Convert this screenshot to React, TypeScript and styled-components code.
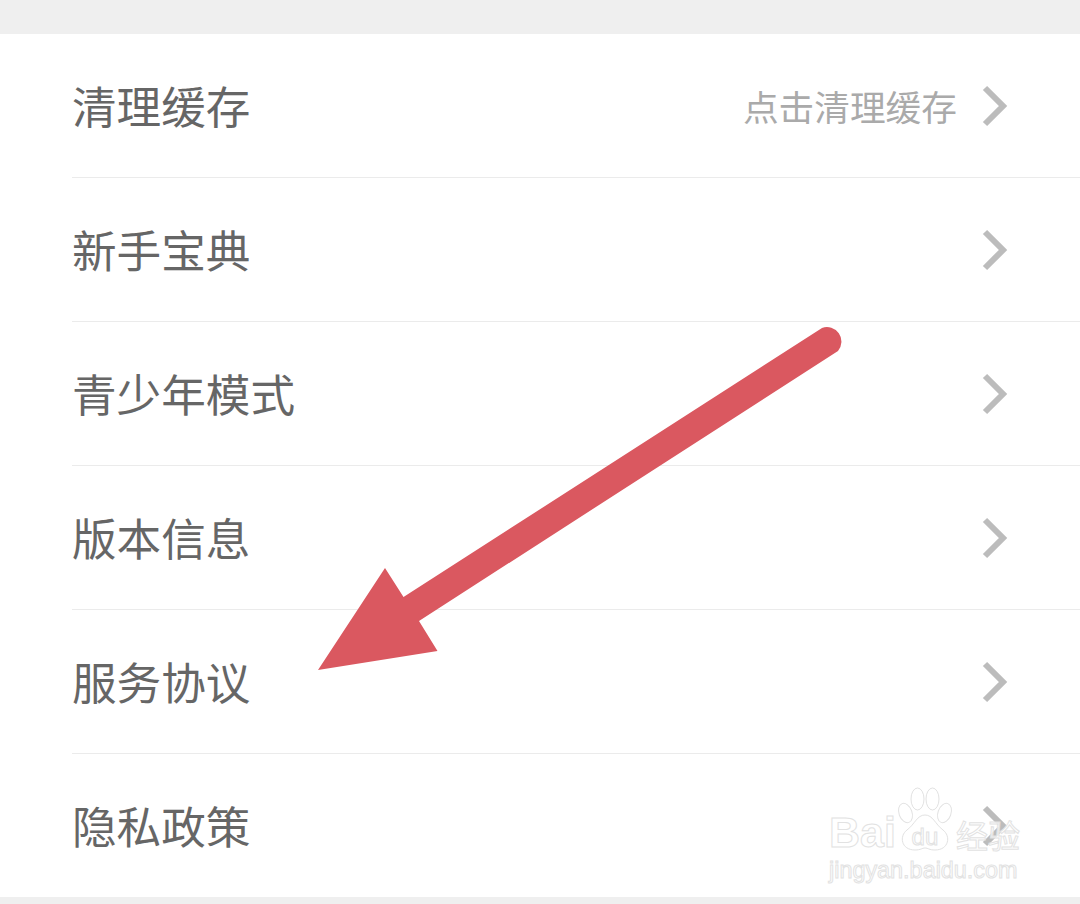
import styled, { createGlobalStyle } from "styled-components";

const GlobalStyle = createGlobalStyle`
  html, body {
    margin: 0;
    padding: 0;
    background: #efefef;
  }
`;

const Page = styled.div`
  position: relative;
  width: 1080px;
  height: 904px;
  overflow: hidden;
  padding: 34px 0 7px;
  box-sizing: border-box;
  background: #efefef;
  font-family: "Noto Sans CJK SC", "Noto Sans", sans-serif;
`;

const List = styled.div`
  display: flex;
  flex-direction: column;
  height: 100%;
  padding-left: 72px;
  background: #fff;
`;

const Row = styled.div`
  display: flex;
  align-items: center;
  flex: none;
  height: 144px;
  padding-right: 72px;
  box-sizing: border-box;
  border-bottom: 1px solid #ebebeb;

  &:last-child {
    height: 143px;
    border-bottom: none;
  }
`;

const Title = styled.span`
  flex: 1;
  font-size: 44.6px;
  line-height: 1;
  color: #666;
`;

const Hint = styled.span`
  margin-right: 25px;
  font-size: 35.7px;
  line-height: 1;
  color: #aaa;
`;

const ChevronIcon = styled.svg`
  display: block;
  flex: none;
  width: 26px;
  height: 42px;
`;

const ArrowOverlay = styled.svg`
  position: absolute;
  left: 310px;
  top: 320px;
  width: 540px;
  height: 360px;
`;

const Watermark = styled.div`
  position: absolute;
  left: 829px;
  top: 787px;
  display: flex;
  flex-direction: column;
  gap: 5px;
  color: rgba(255, 255, 255, 0.75);
  -webkit-text-stroke: 1px #e2e2e2;
`;

const BrandRow = styled.div`
  display: flex;
  align-items: flex-end;
`;

const BrandName = styled.span`
  font-family: "Liberation Sans", sans-serif;
  font-size: 43px;
  font-weight: 700;
  line-height: 40px;
  margin-right: 1px;
`;

const PawBadge = styled.div`
  display: grid;
  width: 56px;
  height: 65px;
  margin-right: 3px;

  > * {
    grid-area: 1 / 1;
  }
`;

const PawIcon = styled.svg`
  display: block;
  width: 56px;
  height: 65px;
`;

const BrandInner = styled.span`
  align-self: end;
  justify-self: center;
  padding-bottom: 3px;
  font-family: "Liberation Sans", sans-serif;
  font-size: 24px;
  line-height: 24px;
`;

const BrandProduct = styled.span`
  font-size: 32px;
  line-height: 36px;
`;

const BrandUrl = styled.span`
  font-family: "Liberation Sans", sans-serif;
  font-size: 23.4px;
  line-height: 26px;
  white-space: nowrap;
`;

const ITEMS = [
  { title: "清理缓存", hint: "点击清理缓存" },
  { title: "新手宝典" },
  { title: "青少年模式" },
  { title: "版本信息" },
  { title: "服务协议" },
  { title: "隐私政策" },
];

const Chevron = () => (
  <ChevronIcon viewBox="0 0 26 42">
    <polyline
      points="3,3 21,21 3,39"
      fill="none"
      stroke="#bcbcbc"
      strokeWidth="6"
    />
  </ChevronIcon>
);

const App = () => {
  return (
    <Page>
      <GlobalStyle />
      <List>
        {ITEMS.map((item) => (
          <Row key={item.title}>
            <Title>{item.title}</Title>
            {item.hint && <Hint>{item.hint}</Hint>}
            <Chevron />
          </Row>
        ))}
      </List>
      <ArrowOverlay viewBox="310 320 540 360">
        <path
          d="M318 670 L385 568 L403.5 597 L822 328 A14.5 14.5 0 0 1 838 351 L419 621 L437.5 651 Z"
          fill="#da5860"
        />
      </ArrowOverlay>
      <Watermark>
        <BrandRow>
          <BrandName>Bai</BrandName>
          <PawBadge>
            <PawIcon viewBox="0 0 56 65" fill="none" stroke="#e2e2e2" strokeWidth="1">
              <ellipse cx="8.5" cy="26" rx="6.5" ry="10" transform="rotate(-20 8.5 26)" />
              <ellipse cx="20.5" cy="12" rx="6.5" ry="11" />
              <ellipse cx="35.5" cy="12" rx="6.5" ry="11" />
              <ellipse cx="47.5" cy="26" rx="6.5" ry="10" transform="rotate(20 47.5 26)" />
              <path d="M28 28 C20 28 18 37 10 43 C2 49 4 63 18 63 C24 63 25 61 28 61 C31 61 32 63 38 63 C52 63 54 49 46 43 C38 37 36 28 28 28 Z" />
            </PawIcon>
            <BrandInner>du</BrandInner>
          </PawBadge>
          <BrandProduct>经验</BrandProduct>
        </BrandRow>
        <BrandUrl>jingyan.baidu.com</BrandUrl>
      </Watermark>
    </Page>
  );
};

export default App;
